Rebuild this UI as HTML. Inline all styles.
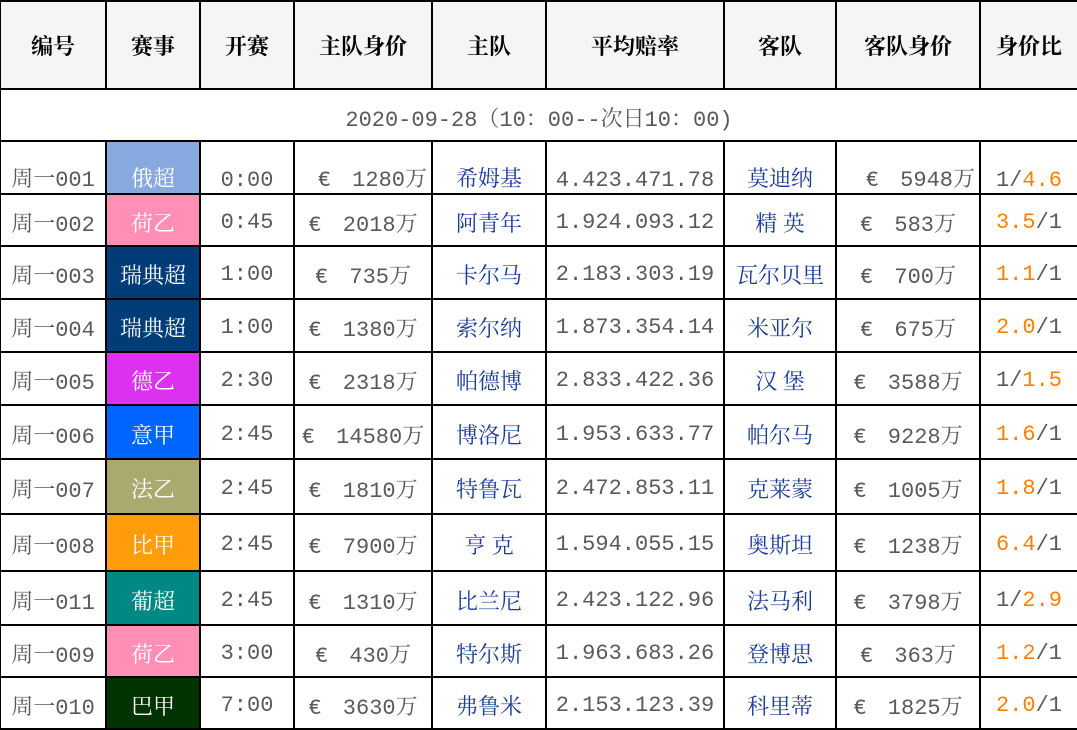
<!DOCTYPE html>
<html><head><meta charset="utf-8"><style>
html,body{margin:0;padding:0;background:#fff;}
body{width:1077px;height:729px;overflow:hidden;}
table{border-collapse:collapse;table-layout:fixed;width:1078px;position:absolute;left:-1px;top:0;}
td,th{border:2px solid #000;padding:0;text-align:center;white-space:pre;font-family:"Liberation Mono","Noto Serif CJK SC","Noto Serif CJK JP",serif;font-size:22px;color:#5a5a5a;overflow:hidden;}
td{padding-top:4px;}
th{background:#f5f5f5;color:#000;font-weight:bold;height:86px;font-family:"Liberation Serif","Noto Serif CJK SC",serif;}
.t{color:#1c3c96;font-family:"Liberation Serif","Noto Serif CJK SC",serif;}
.o{color:#ff8000;}
.l{color:#fff;font-family:"Liberation Serif","Noto Serif CJK SC",serif;}
.r1 td{vertical-align:bottom;padding-top:0;padding-bottom:0;}
.e{margin-right:8px;}
</style></head><body>
<table>
<colgroup><col style="width:106px"><col style="width:94px"><col style="width:94px"><col style="width:138px"><col style="width:114px"><col style="width:178px"><col style="width:112px"><col style="width:144px"><col style="width:98px"></colgroup>
<tr><th>编号</th><th>赛事</th><th>开赛</th><th>主队身价</th><th>主队</th><th>平均赔率</th><th>客队</th><th>客队身价</th><th>身价比</th></tr>
<tr style="height:52px"><td colspan="9">2020-09-28（10：00--次日10：00)</td></tr>
<tr class="r1" style="height:53px"><td>周一001</td><td class="l" style="background:#88a8e0">俄超</td><td>0:00</td><td style="text-align:right;padding-right:4px"><span class="e">€</span> 1280万</td><td class="t">希姆基</td><td>4.423.471.78</td><td class="t">莫迪纳</td><td style="text-align:right;padding-right:4px"><span class="e">€</span> 5948万</td><td>1/<span class="o">4.6</span></td></tr>
<tr style="height:52px"><td>周一002</td><td class="l" style="background:#ff8fb4">荷乙</td><td>0:45</td><td><span class="e">€</span> 2018万</td><td class="t">阿青年</td><td>1.924.093.12</td><td class="t">精 英</td><td><span class="e">€</span> 583万</td><td><span class="o">3.5</span>/1</td></tr>
<tr style="height:53px"><td>周一003</td><td class="l" style="background:#003c78">瑞典超</td><td>1:00</td><td><span class="e">€</span> 735万</td><td class="t">卡尔马</td><td>2.183.303.19</td><td class="t">瓦尔贝里</td><td><span class="e">€</span> 700万</td><td><span class="o">1.1</span>/1</td></tr>
<tr style="height:53px"><td>周一004</td><td class="l" style="background:#003c78">瑞典超</td><td>1:00</td><td><span class="e">€</span> 1380万</td><td class="t">索尔纳</td><td>1.873.354.14</td><td class="t">米亚尔</td><td><span class="e">€</span> 675万</td><td><span class="o">2.0</span>/1</td></tr>
<tr style="height:53px"><td>周一005</td><td class="l" style="background:#dc32f0">德乙</td><td>2:30</td><td><span class="e">€</span> 2318万</td><td class="t">帕德博</td><td>2.833.422.36</td><td class="t">汉 堡</td><td><span class="e">€</span> 3588万</td><td>1/<span class="o">1.5</span></td></tr>
<tr style="height:54px"><td>周一006</td><td class="l" style="background:#0064ff">意甲</td><td>2:45</td><td><span class="e">€</span> 14580万</td><td class="t">博洛尼</td><td>1.953.633.77</td><td class="t">帕尔马</td><td><span class="e">€</span> 9228万</td><td><span class="o">1.6</span>/1</td></tr>
<tr style="height:55px"><td>周一007</td><td class="l" style="background:#aaaa70">法乙</td><td>2:45</td><td><span class="e">€</span> 1810万</td><td class="t">特鲁瓦</td><td>2.472.853.11</td><td class="t">克莱蒙</td><td><span class="e">€</span> 1005万</td><td><span class="o">1.8</span>/1</td></tr>
<tr style="height:57px"><td>周一008</td><td class="l" style="background:#ff9c0a">比甲</td><td>2:45</td><td><span class="e">€</span> 7900万</td><td class="t">亨 克</td><td>1.594.055.15</td><td class="t">奥斯坦</td><td><span class="e">€</span> 1238万</td><td><span class="o">6.4</span>/1</td></tr>
<tr style="height:54px"><td>周一011</td><td class="l" style="background:#008884">葡超</td><td>2:45</td><td><span class="e">€</span> 1310万</td><td class="t">比兰尼</td><td>2.423.122.96</td><td class="t">法马利</td><td><span class="e">€</span> 3798万</td><td>1/<span class="o">2.9</span></td></tr>
<tr style="height:52px"><td>周一009</td><td class="l" style="background:#ff8fb4">荷乙</td><td>3:00</td><td><span class="e">€</span> 430万</td><td class="t">特尔斯</td><td>1.963.683.26</td><td class="t">登博思</td><td><span class="e">€</span> 363万</td><td><span class="o">1.2</span>/1</td></tr>
<tr style="height:52px"><td>周一010</td><td class="l" style="background:#003300">巴甲</td><td>7:00</td><td><span class="e">€</span> 3630万</td><td class="t">弗鲁米</td><td>2.153.123.39</td><td class="t">科里蒂</td><td><span class="e">€</span> 1825万</td><td><span class="o">2.0</span>/1</td></tr>
</table>
</body></html>
